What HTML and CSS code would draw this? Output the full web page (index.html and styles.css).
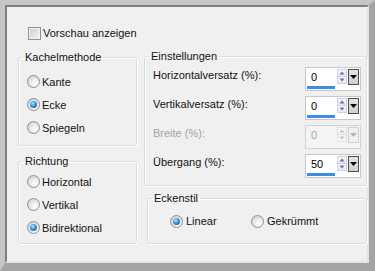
FILE: index.html
```html
<!DOCTYPE html>
<html lang="de">
<head>
<meta charset="utf-8">
<title>Kachelmethode</title>
<link rel="stylesheet" href="styles.css">
</head>
<body>
<div class="frame">
  <div class="dialog">
    <div class="check-row"><span class="checkbox"></span><span>Vorschau anzeigen</span></div>
    <div class="columns">
      <div class="col-left">
        <fieldset class="group g-method">
          <legend>Kachelmethode</legend>
          <div class="opt"><span class="radio"></span><span>Kante</span></div>
          <div class="opt"><span class="radio on"></span><span>Ecke</span></div>
          <div class="opt"><span class="radio"></span><span>Spiegeln</span></div>
        </fieldset>
        <fieldset class="group g-dir">
          <legend>Richtung</legend>
          <div class="opt"><span class="radio"></span><span>Horizontal</span></div>
          <div class="opt"><span class="radio"></span><span>Vertikal</span></div>
          <div class="opt"><span class="radio on"></span><span>Bidirektional</span></div>
        </fieldset>
      </div>
      <div class="col-right">
        <fieldset class="group g-settings">
          <legend>Einstellungen</legend>
          <div class="row">
            <span class="lbl">Horizontalversatz (%):</span>
            <div class="spin">
              <div class="field"><span class="val">0</span><span class="bar"></span></div>
              <div class="arrows">
                <span class="arr"><svg width="8" height="6" viewBox="0 0 8 6"><path d="M1.5 4.5h5L4 1.5z" fill="#5f73b3"/></svg></span>
                <span class="arr"><svg width="8" height="6" viewBox="0 0 8 6"><path d="M1.5 1.5h5L4 4.5z" fill="#5f73b3"/></svg></span>
              </div>
              <span class="drop"><svg width="9" height="6" viewBox="0 0 9 6"><path d="M1 1h7L4.5 5z" fill="#000"/></svg></span>
            </div>
          </div>
          <div class="row">
            <span class="lbl">Vertikalversatz (%):</span>
            <div class="spin">
              <div class="field"><span class="val">0</span><span class="bar"></span></div>
              <div class="arrows">
                <span class="arr"><svg width="8" height="6" viewBox="0 0 8 6"><path d="M1.5 4.5h5L4 1.5z" fill="#5f73b3"/></svg></span>
                <span class="arr"><svg width="8" height="6" viewBox="0 0 8 6"><path d="M1.5 1.5h5L4 4.5z" fill="#5f73b3"/></svg></span>
              </div>
              <span class="drop"><svg width="9" height="6" viewBox="0 0 9 6"><path d="M1 1h7L4.5 5z" fill="#000"/></svg></span>
            </div>
          </div>
          <div class="row disabled">
            <span class="lbl">Breite (%):</span>
            <div class="spin">
              <div class="field"><span class="val">0</span><span class="bar"></span></div>
              <div class="arrows">
                <span class="arr"><svg width="8" height="6" viewBox="0 0 8 6"><path d="M1.5 4.5h5L4 1.5z" fill="#bfc3c9"/></svg></span>
                <span class="arr"><svg width="8" height="6" viewBox="0 0 8 6"><path d="M1.5 1.5h5L4 4.5z" fill="#bfc3c9"/></svg></span>
              </div>
              <span class="drop"><svg width="9" height="6" viewBox="0 0 9 6"><path d="M1 1h7L4.5 5z" fill="#b4b4b4"/></svg></span>
            </div>
          </div>
          <div class="row">
            <span class="lbl">Übergang (%):</span>
            <div class="spin">
              <div class="field"><span class="val">50</span><span class="bar"></span></div>
              <div class="arrows">
                <span class="arr"><svg width="8" height="6" viewBox="0 0 8 6"><path d="M1.5 4.5h5L4 1.5z" fill="#5f73b3"/></svg></span>
                <span class="arr"><svg width="8" height="6" viewBox="0 0 8 6"><path d="M1.5 1.5h5L4 4.5z" fill="#5f73b3"/></svg></span>
              </div>
              <span class="drop"><svg width="9" height="6" viewBox="0 0 9 6"><path d="M1 1h7L4.5 5z" fill="#000"/></svg></span>
            </div>
          </div>
        </fieldset>
        <fieldset class="group g-corner">
          <legend>Eckenstil</legend>
          <div class="opts-inline">
            <div class="opt opt-linear"><span class="radio on"></span><span>Linear</span></div>
            <div class="opt"><span class="radio"></span><span>Gekrümmt</span></div>
          </div>
        </fieldset>
      </div>
    </div>
  </div>
</div>
</body>
</html>
```
FILE: styles.css
```css
* { box-sizing: border-box; }
html, body { margin: 0; padding: 0; }
body {
  font-family: "Liberation Sans", Arial, sans-serif;
  font-size: 11px;
  line-height: 14px;
  color: #111;
  background: #a6a6a6;
}
.frame {
  width: 375px;
  height: 271px;
  border-style: solid;
  border-width: 5px 6px 8px 5px;
  border-color: #c6c6c6 #a4a4a4 #a4a4a4 #c6c6c6;
}
.dialog {
  height: 100%;
  background: #f0f0f0;
  border-style: solid;
  border-width: 2px;
  border-color: #808080 #e4e4e4 #e4e4e4 #808080;
  padding: 19px 0 0 11px;
}
.check-row {
  display: flex;
  align-items: center;
  gap: 2px;
  height: 14px;
  margin-left: 10px;
}
.checkbox {
  width: 13px;
  height: 13px;
  border: 1px solid #8e8f8f;
  background: linear-gradient(135deg, #c9ccd1 0%, #eeeeef 80%);
  box-shadow: inset 0 0 0 1px #f4f4f4;
  flex: none;
}
.columns {
  display: flex;
  gap: 7px;
  margin-top: 9px;
  align-items: flex-start;
}
.col-left {
  width: 119px;
  margin-top: 1px;
  display: flex;
  flex-direction: column;
  gap: 8px;
}
.col-right {
  width: 223px;
  display: flex;
  flex-direction: column;
  gap: 5px;
}
.group {
  margin: 0;
  min-width: 0;
  border: 1px solid #d5dfe5;
  border-radius: 3px;
  box-shadow: inset 1px 1px 0 #fff, 1px 1px 0 #fff;
  padding: 0 5px 0 8px;
}
.group legend {
  padding: 0 2px;
  margin-left: -4px;
  line-height: 14px;
}
.g-method { padding-top: 6px; padding-bottom: 6px; }
.g-dir { padding-top: 2px; padding-bottom: 4px; }
.opt {
  display: flex;
  align-items: center;
  gap: 2px;
  height: 23px;
}
.radio {
  width: 13px;
  height: 13px;
  flex: none;
  border-radius: 50%;
  border: 1px solid #8c8e90;
  background: radial-gradient(circle at 65% 70%, #ffffff 0%, #e9e9e9 45%, #c8c9cb 100%);
  display: flex;
  align-items: center;
  justify-content: center;
}
.radio.on::after {
  content: "";
  width: 7px;
  height: 7px;
  border-radius: 50%;
  background: radial-gradient(circle at 40% 35%, #b9e6fb 0%, #3a94d6 45%, #0d4c8a 100%);
}
.g-settings { padding-top: 4px; padding-bottom: 7px; }
.row {
  display: flex;
  justify-content: space-between;
  align-items: flex-start;
  height: 24px;
}
.row + .row { margin-top: 5px; }
.lbl { line-height: 17px; }
.disabled .lbl, .disabled .val { color: #a3a3a3; }
.spin {
  display: flex;
  align-items: flex-start;
  width: 56px;
  height: 24px;
  padding: 1px;
  border: 1px solid #c7c7c7;
  background: #fff;
}
.field {
  width: 29px;
  display: flex;
  flex-direction: column;
}
.val {
  height: 17px;
  line-height: 17px;
  padding-left: 4px;
  color: #000;
}
.bar {
  width: 28px;
  height: 3px;
  background: #3b8de8;
}
.disabled .bar { background: transparent; }
.disabled .spin { background: #f4f4f4; border-color: #d2d2d2; }
.arrows {
  margin-left: 1px;
  width: 10px;
  display: flex;
  flex-direction: column;
}
.arr {
  height: 8px;
  display: flex;
  align-items: center;
  justify-content: center;
  border: 1px solid #cdd3dd;
  background: linear-gradient(#f7f9fc, #e4e9f1);
}
.arr + .arr { margin-top: -1px; }
.drop {
  margin-left: 1px;
  width: 11px;
  height: 16px;
  display: flex;
  align-items: center;
  justify-content: center;
  border: 1px solid #4e4e4e;
  background: linear-gradient(#e6e6e6, #cfcfcf);
}
.disabled .drop { border-color: #d0d0d0; background: #f0f0f0; }
.disabled .arr { border-color: #e0e0e0; background: #f6f6f6; }
.g-corner {
  margin-left: 3px;
  padding-top: 8px;
  padding-bottom: 14px;
}
.opts-inline {
  display: flex;
  margin-left: 14px;
}
.opts-inline .opt { height: 16px; gap: 3px; }
.opt-linear { width: 81px; }
```
